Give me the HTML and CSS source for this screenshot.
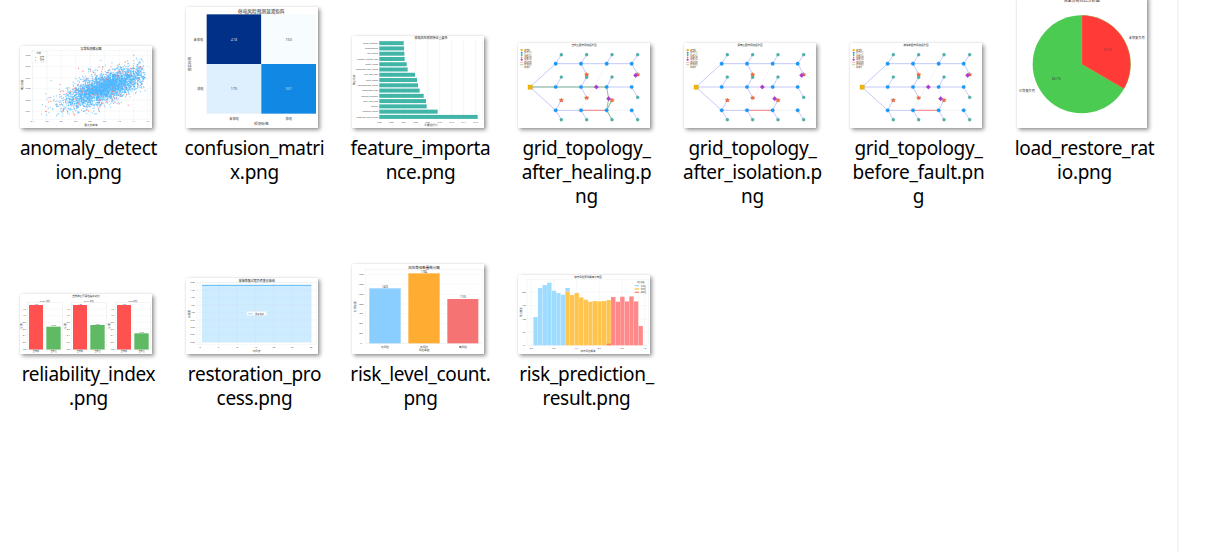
FILE: index.html
```html
<!DOCTYPE html>
<html lang="zh-CN">
<head>
    <meta charset="UTF-8">
    <title>results</title>
    <link rel="stylesheet" href="styles.css">
</head>
<body>

<div class="window">
    <div class="files">
        <div class="file">
            <div class="preview">
                <svg class="thumb" width="132" height="82" viewBox="30 30 396 246">
                    <g id="scatterGrid" class="grid"></g>
                    <g id="scatter"></g>
                    <rect class="legend" x="66" y="47" width="44" height="32"/>
                    <text class="tick" x="86" y="55">状态</text>
                    <circle cx="77" cy="64" r="1.5" fill="#4db8ff"/><text class="tick" x="96" y="67">正常</text>
                    <circle cx="77" cy="73" r="1.5" fill="#ff6b6b"/><text class="tick" x="96" y="76">异常</text>
                    <text class="title" x="243" y="41">异常检测散点图</text>
                    <text class="axis" x="243" y="270">最大负载率</text>
                    <text class="axis" transform="translate(40 147) rotate(-90)">电压偏差</text>
                </svg>
            </div>
            <div class="name">anomaly_detect<br>ion.png</div>
        </div>

        <div class="file">
            <div class="preview">
                <svg class="thumb" width="132" height="121" viewBox="30 21 396 363">
                    <rect x="92" y="43" width="164" height="149" fill="#003087"/>
                    <rect x="256" y="43" width="164" height="149" fill="#f7fcff"/>
                    <rect x="92" y="192" width="164" height="149" fill="#deeffe"/>
                    <rect x="256" y="192" width="164" height="149" fill="#1288e5"/>
                    <text class="title big" x="256" y="39">停电风险预测混淆矩阵</text>
                    <text class="value light" x="174" y="122">418</text>
                    <text class="value" x="338" y="122">150</text>
                    <text class="value" x="174" y="269">175</text>
                    <text class="value light" x="338" y="269">337</text>
                    <text class="label" x="67" y="122">未停电</text>
                    <text class="label" x="73" y="269">停电</text>
                    <text class="label" x="174" y="359">未停电</text>
                    <text class="label" x="338" y="359">停电</text>
                    <text class="axis large" x="256" y="374">预测标签</text>
                    <text class="axis large" transform="translate(46 192) rotate(-90)">真实标签</text>
                </svg>
            </div>
            <div class="name">confusion_matri<br>x.png</div>
        </div>

        <div class="file">
            <div class="preview">
                <svg class="thumb" width="132" height="92" viewBox="30 30 396 276">
                    <g id="featureBars"></g>
                    <text class="title" x="267" y="40">停电风险预测特征重要性</text>
                    <text class="axis" x="267" y="299">重要性得分</text>
                    <text class="axis" transform="translate(40 162) rotate(-90)">特征名称</text>
                </svg>
            </div>
            <div class="name">feature_importa<br>nce.png</div>
        </div>

        <div class="file">
            <div class="preview">
                <svg class="thumb" width="132" height="85" viewBox="24 27 396 255">
                    <defs>
                        <g id="topologyLines">
                            <path class="branch" d="M60 159L137 89H365M60 159H365M60 159L137 229H290"/>
                            <path class="branch" d="M137 89l17 -27M213 89l17 -27M290 89l16 -27M365 89l18 -27M213 89l17 32M365 89l18 32M137 159l17 -30M213 159l17 -30M290 159l16 -30M213 159l17 32M365 159l18 31M137 229l17 -31M290 229l16 -31M137 229l17 28M213 229l17 28M290 229l16 28M365 229l18 28"/>
                            <path class="tie" d="M213 229L290 89M290 159L296 194L290 229H365M365 159L377 125"/>
                            <path d="M213 229H290" stroke="#ff8a82" stroke-width="3"/>
                        </g>
                        <g id="topologyNodes">
                            <rect x="54" y="153" width="13" height="13" fill="#f2b705" stroke="#c99b28"/>
                            <g fill="#159bff" stroke="#4a8fd0" stroke-width=".7">
                                <circle cx="137" cy="89" r="5.5"/><circle cx="213" cy="89" r="5.5"/><circle cx="290" cy="89" r="5.5"/><circle cx="365" cy="89" r="5.5"/>
                                <circle cx="137" cy="159" r="5.5"/><circle cx="213" cy="159" r="5.5"/><circle cx="290" cy="159" r="5.5"/><circle cx="365" cy="159" r="5.5"/>
                                <circle cx="137" cy="229" r="5.5"/><circle cx="213" cy="229" r="5.5"/><circle cx="290" cy="229" r="5.5"/><circle cx="365" cy="229" r="5.5"/>
                            </g>
                            <g fill="#4ab3aa" stroke="#6d9c98" stroke-width=".7">
                                <circle cx="154" cy="62" r="4.7"/><circle cx="230" cy="62" r="4.7"/><circle cx="306" cy="62" r="4.7"/><circle cx="383" cy="62" r="4.7"/>
                                <circle cx="154" cy="129" r="4.7"/><circle cx="230" cy="130" r="4.7"/><circle cx="306" cy="129" r="4.7"/><circle cx="383" cy="190" r="4.7"/>
                                <circle cx="154" cy="257" r="4.7"/><circle cx="230" cy="257" r="4.7"/><circle cx="306" cy="257" r="4.7"/><circle cx="383" cy="257" r="4.7"/>
                            </g>
                            <g fill="#ff6b3d" stroke="#85594c" stroke-width=".7">
                                <path id="star" d="M230 115l2 4h5l-3 3 1 4h-10l1-4-3-3h5z"/>
                                <use href="#star" x="153"/><use href="#star" y="70"/>
                                <use href="#star" x="-76" y="77"/><use href="#star" x="76" y="77"/>
                            </g>
                            <path d="M259 152l7 7-7 7-7-7zM377 117l7 7-7 7-7-7zM296 187l7 7-7 7-7-7z" fill="#b436d4" stroke="#9260a4" stroke-width=".7"/>
                            <g class="mini">
                                <rect x="32" y="45" width="6" height="6" fill="#f2b705"/><text x="43" y="51">变电站</text>
                                <circle cx="35" cy="56" r="3" fill="#159bff"/><text x="43" y="58">配电节点</text>
                                <circle cx="35" cy="63" r="3" fill="#4ab3aa"/><text x="43" y="65">负荷节点</text>
                                <path d="M35 67l3 5h-6z" fill="#ff6b3d"/><text x="43" y="72">重要负荷</text>
                                <path d="M35 73l4 4-4 4-4-4z" fill="#b436d4"/><text x="43" y="79">联络开关</text>
                                <path d="M30 85h10" stroke="#ff6b62" stroke-width="1.5"/><text x="43" y="87">故障线路</text>
                                <path d="M30 92h10" stroke="#58b55e" stroke-width="1.5"/><text x="43" y="94">转供路径</text>
                                <path d="M30 99h10" stroke="#ddd"/><text x="43" y="101">联络线</text>
                            </g>
                        </g>
                    </defs>
                    <use href="#topologyLines"/>
                    <path class="restored" d="M60 159H290L296 194L290 229M306 198L290 229L306 257"/>
                    <use href="#topologyNodes"/>
                    <text class="title small" x="222" y="35">自愈后配电网络拓扑图</text>
                </svg>
            </div>
            <div class="name">grid_topology_<br>after_healing.p<br>ng</div>
        </div>

        <div class="file">
            <div class="preview">
                <svg class="thumb" width="132" height="85" viewBox="24 27 396 255">
                    <use href="#topologyLines"/>
                    <use href="#topologyNodes"/>
                    <text class="title small" x="222" y="35">隔离后配电网络拓扑图</text>
                </svg>
            </div>
            <div class="name">grid_topology_<br>after_isolation.p<br>ng</div>
        </div>

        <div class="file">
            <div class="preview">
                <svg class="thumb" width="132" height="85" viewBox="24 27 396 255">
                    <use href="#topologyLines"/>
                    <use href="#topologyNodes"/>
                    <text class="title small" x="222" y="35">故障前配电网络拓扑图</text>
                </svg>
            </div>
            <div class="name">grid_topology_<br>before_fault.pn<br>g</div>
        </div>

        <div class="file">
            <div class="preview">
                <svg class="thumb" width="130" height="132" viewBox="33 -12 390 396">
                    <circle cx="227" cy="193" r="147" fill="#4ccb53"/>
                    <path d="M228 193V46A147 147 0 0 1 354 266Z" fill="#ff3a37" stroke="#e8a060" stroke-width="1"/>
                    <text class="title pie" x="227" y="5">恢复负荷占比分析图</text>
                    <text class="label" x="392" y="116">未恢复负荷</text>
                    <text class="label" x="63" y="277">已恢复负荷</text>
                    <text class="label faded" x="305" y="152">33.3%</text>
                    <text class="label" x="151" y="240">66.7%</text>
                </svg>
            </div>
            <div class="name">load_restore_rat<br>io.png</div>
        </div>

        <div class="file">
            <div class="preview">
                <svg class="thumb" width="132" height="60" viewBox="30 42 396 180">
                    <g id="reliability"></g>
                    <text class="title small" x="228" y="50">自愈前后可靠性指标对比</text>
                </svg>
            </div>
            <div class="name">reliability_index<br>.png</div>
        </div>

        <div class="file">
            <div class="preview">
                <svg class="thumb" width="132" height="76" viewBox="30 36 396 228">
                    <rect x="78" y="58" width="328" height="171" fill="#ceecff"/>
                    <g id="restorationGrid" class="grid"></g>
                    <path d="M78 58H406" stroke="#5bb8f5" stroke-width="3"/>
                    <rect class="legend" x="212" y="136" width="60" height="13"/>
                    <path d="M216 143H230" stroke="#80caf8" stroke-width="2"/>
                    <text class="tick" x="251" y="146">恢复负荷</text>
                    <text class="title" x="242" y="47">故障恢复过程负荷变化曲线</text>
                    <text class="axis" x="242" y="257">时间步</text>
                    <text class="axis" transform="translate(41 144) rotate(-90)">负荷量</text>
                </svg>
            </div>
            <div class="name">restoration_pro<br>cess.png</div>
        </div>

        <div class="file">
            <div class="preview">
                <svg class="thumb" width="132" height="90" viewBox="30 30 396 270">
                    <g id="levelGrid" class="grid"></g>
                    <rect x="82" y="103" width="94" height="165" fill="#8acdff"/>
                    <rect x="199" y="58" width="94" height="210" fill="#ffac33"/>
                    <rect x="316" y="135" width="93" height="133" fill="#f57372"/>
                    <text class="count" x="129" y="101">1403</text>
                    <text class="count" x="246" y="56">1784</text>
                    <text class="count" x="363" y="132">1133</text>
                    <text class="count" x="129" y="281">低风险</text>
                    <text class="count" x="246" y="281">中风险</text>
                    <text class="count" x="363" y="281">高风险</text>
                    <text class="title level" x="246" y="44">风险等级数量统计图</text>
                    <text class="axis" x="246" y="292">风险等级</text>
                    <text class="axis" transform="translate(42 158) rotate(-90)">样本数量</text>
                </svg>
            </div>
            <div class="name">risk_level_count.<br>png</div>
        </div>

        <div class="file">
            <div class="preview">
                <svg class="thumb" width="132" height="79" viewBox="30 33 396 237">
                    <g id="histGrid" class="grid"></g>
                    <g id="histogram"></g>
                    <g class="mini">
                        <text x="387" y="57">风险等级</text>
                        <rect x="380" y="63" width="13" height="4" fill="#9edcff"/><text x="398" y="68">低风险</text>
                        <rect x="380" y="73" width="13" height="4" fill="#ffc44d"/><text x="398" y="78">中风险</text>
                        <rect x="380" y="83" width="13" height="4" fill="#ff8888"/><text x="398" y="88">高风险</text>
                    </g>
                    <text class="title small" x="240" y="43">停电风险预测概率分布图</text>
                    <text class="axis small" x="240" y="264">停电风险概率</text>
                    <text class="axis small" transform="translate(41 145) rotate(-90)">样本数量</text>
                </svg>
            </div>
            <div class="name">risk_prediction_<br>result.png</div>
        </div>
    </div>
</div>

<script src="charts.js"></script>
</body>
</html>
```

FILE: styles.css
```css
body {
    margin: 0;
    background-color: #fff;
    overflow: hidden;
}
.window {
    display: flex;
    align-items: flex-start;
    box-sizing: border-box;
    width: 1179px;
    height: 552px;
    padding-left: 5px;
    border-right: 2px solid #f5f5f5;
}
.files {
    display: grid;
    grid-template-columns: repeat(7, 166px);
    grid-auto-rows: 226px;
    margin-top: -4px;
}
.preview {
    display: flex;
    align-items: flex-end;
    justify-content: center;
    height: 132px;
    padding-right: 4px;
}
.thumb {
    display: block;
    background-color: #fff;
    box-shadow: 0 0 1px rgba(0,0,0,0.15), 2px 2px 4px rgba(0,0,0,0.42);
}
.name {
    margin-top: 8px;
    padding-left: 1px;
    text-align: center;
    white-space: nowrap;
    font-family: "Noto Sans", "Noto Sans CJK SC", sans-serif;
    font-size: 19px;
    line-height: 24px;
    letter-spacing: -0.3px;
    color: #000;
}

/* charts */
.thumb text {
    font-family: "Noto Sans", "Noto Sans CJK SC", sans-serif;
    font-size: 8px;
    text-anchor: middle;
    fill: #444;
}
.thumb .title {
    font-size: 9px;
    fill: #222;
}
.thumb .big {
    font-size: 14px;
}
.thumb .pie {
    font-size: 12px;
}
.thumb .level {
    font-size: 10.5px;
}
.thumb .small {
    font-size: 7.5px;
}
.thumb .large {
    font-size: 11px;
}
.thumb .value {
    font-size: 11px;
}
.thumb .light {
    fill: #c5d9ee;
}
.thumb .label {
    font-size: 9.5px;
}
.thumb .count {
    font-size: 8px;
}
.thumb .faded {
    fill: #a33;
}
.thumb .tick {
    font-size: 6.5px;
}
.thumb .mini text {
    font-size: 5.5px;
    text-anchor: start;
}
.grid {
    stroke: #ccd3dc;
    stroke-opacity: 0.5;
    stroke-width: 1;
}
.legend {
    fill: #fff;
    fill-opacity: 0.85;
    stroke: #e5e5e5;
}
.branch {
    fill: none;
    stroke: #b6bcf8;
    stroke-width: 2.4;
}
.tie {
    fill: none;
    stroke: #ddd;
    stroke-width: 1.3;
    stroke-dasharray: 3 1;
}
.restored {
    fill: none;
    stroke: #82bd85;
    stroke-width: 2.6;
}
```

FILE: charts.js
```js
const NS = 'http://www.w3.org/2000/svg';

function draw(parent, tag, attrs, text) {
    const el = document.createElementNS(NS, tag);
    for (const key in attrs) {
        el.setAttribute(key, attrs[key]);
    }
    if (text !== undefined) {
        el.textContent = text;
    }
    document.getElementById(parent).appendChild(el);
}

function tick(parent, x, y, text) {
    draw(parent, 'text', { x: x, y: y, class: 'tick', stroke: 'none' }, text);
}

// xs, ys: grid line positions; box: [left, top, right, bottom]
function grid(parent, box, xs, ys) {
    const [l, t, r, b] = box;
    draw(parent, 'rect', { x: l, y: t, width: r - l, height: b - t, fill: 'none' });
    xs.forEach(x => draw(parent, 'path', { d: `M${x} ${t}V${b}` }));
    ys.forEach(y => draw(parent, 'path', { d: `M${l} ${y}H${r}` }));
}

let seed = 7;
function rand() {
    seed = (seed * 16807) % 2147483647;
    return seed / 2147483647;
}
function normal() {
    return Math.sqrt(-2 * Math.log(rand())) * Math.cos(2 * Math.PI * rand());
}

// anomaly detection
const sx = [67, 111, 154, 197, 240, 284, 328, 371, 413];
const sy = [59, 92, 126, 158, 192, 225];
grid('scatterGrid', [67, 43, 421, 250], sx, sy);
['0.4', '0.5', '0.6', '0.7', '0.8', '0.9', '1.0', '1.1', '1.2'].forEach((t, i) => tick('scatterGrid', sx[i], 259, t));
['0.06', '0.05', '0.04', '0.03', '0.02', '0.01'].forEach((t, i) => tick('scatterGrid', 54, sy[i] + 2, t));
for (let i = 0; i < 3400; i++) {
    const odd = i % 15 === 0;
    const x = 286 + normal() * (odd ? 82 : 60);
    const y = 154 - (x - 286) * 0.33 + normal() * (odd ? 34 : 21);
    if (x < 80 || x > 405 || y < 52 || y > 241) continue;
    draw('scatter', 'circle', { cx: x.toFixed(1), cy: y.toFixed(1), r: odd ? 2 : 1.9, fill: odd ? '#ff7777' : '#4db8ff', 'fill-opacity': odd ? 0.8 : 0.7 });
}

// feature importance
const features = [
    ['wind_humidity', 185], ['temperature', 186], ['line_length', 187], ['voltage_change_rate', 188],
    ['repair_times', 194], ['important_user_count', 197], ['avg_load_rate', 219], ['wind_speed', 225],
    ['maintenance_count', 228], ['equipment_age', 233], ['outage_duration', 245], ['max_load_rate', 252],
    ['rainfall', 254], ['lightning_count', 287], ['historical_fault_count', 407]
];
[112, 148, 185, 221, 257, 293, 329, 365, 401, 421].forEach((x, i) => {
    draw('featureBars', 'path', { d: `M${x} 43V280`, stroke: '#e2e2e2' });
    if (i < 9) tick('featureBars', x, 290, (i * 0.02).toFixed(2));
});
features.forEach(([name, end], i) => {
    const y = 45.5 + i * 15.8;
    draw('featureBars', 'rect', { x: 112, y: y, width: end - 112, height: 12, fill: '#40b5a8' });
    draw('featureBars', 'text', { x: 108, y: y + 8, class: 'tick', style: 'text-anchor: end' }, name);
});

// reliability index: left edge, bar tops, title
[[52, 75, 140, 'SAIDI 对比'], [184, 75, 135, 'SAIFI 对比'], [316, 75, 160, 'ENS 对比']].forEach(([x, top1, top2, name]) => {
    draw('reliability', 'rect', { x: x, y: 68, width: 106, height: 141, fill: 'none', stroke: '#ddd' });
    for (let i = 0; i < 7; i++) {
        const y = 87 + i * 20;
        draw('reliability', 'path', { d: `M${x} ${y}H${x + 106}`, stroke: '#e8e8e8' });
        tick('reliability', x - 9, y + 2, (1.2 - i * 0.2).toFixed(1));
    }
    draw('reliability', 'rect', { x: x + 5, y: top1, width: 42, height: 208.5 - top1, fill: '#ff5250' });
    draw('reliability', 'rect', { x: x + 57, y: top2, width: 43, height: 208.5 - top2, fill: '#5fba63' });
    tick('reliability', x + 53, 65, name);
    tick('reliability', x + 26, 74, '1.37');
    tick('reliability', x + 79, top2 - 1, '0.70');
    tick('reliability', x + 26, 217, '自愈前');
    tick('reliability', x + 79, 217, '自愈后');
    draw('reliability', 'text', { transform: `translate(${x - 16} 138) rotate(-90)`, class: 'tick' }, '指标值');
});

// restoration process
const rx = [72, 128, 183, 239, 294, 349, 405];
const ry = [50, 72, 95, 117, 140, 162, 184, 206, 229];
grid('restorationGrid', [63, 49, 421, 235], rx, ry);
rx.forEach((x, i) => tick('restorationGrid', x, 246, i * 5));
ry.forEach((y, i) => tick('restorationGrid', 50, y + 2, (2 - i * 0.25).toFixed(2)));

// risk level count
const ly = [62, 91, 121, 150, 179, 209, 238, 268];
grid('levelGrid', [71, 47, 420, 268], [], ly);
ly.forEach((y, i) => tick('levelGrid', 57, y + 2, 1750 - i * 250));

// risk probability histogram
const hx = [70, 138, 206, 274, 342, 410];
const hy = [85, 125, 165, 204, 244];
grid('histGrid', [57, 46, 421, 244], hx, hy);
hx.forEach((x, i) => tick('histGrid', x, 254, (i * 0.2).toFixed(1)));
hy.forEach((y, i) => tick('histGrid', 48, y + 2, 200 - i * 50));
const tops = [159, 72, 63, 56, 80, 87, 92, 82, 93, 87, 100, 107, 113, 111, 112, 111, 108, 99, 113, 98, 112, 97, 112, 186];
tops.forEach((top, i) => {
    const x = 76 + i * 13.7;
    const fill = i < 7 ? '#9edcff' : i < 17 ? '#ffc44d' : '#ff8888';
    draw('histogram', 'rect', { x: x, y: top, width: 13.7, height: 244 - top, fill: fill, stroke: '#fff', 'stroke-opacity': 0.5, 'stroke-width': 0.8 });
});
draw('histogram', 'rect', { x: 172, y: 72, width: 13.5, height: 10, fill: '#9edcff' });
draw('histogram', 'rect', { x: 296, y: 239, width: 13, height: 5, fill: '#ff8060' });
```
